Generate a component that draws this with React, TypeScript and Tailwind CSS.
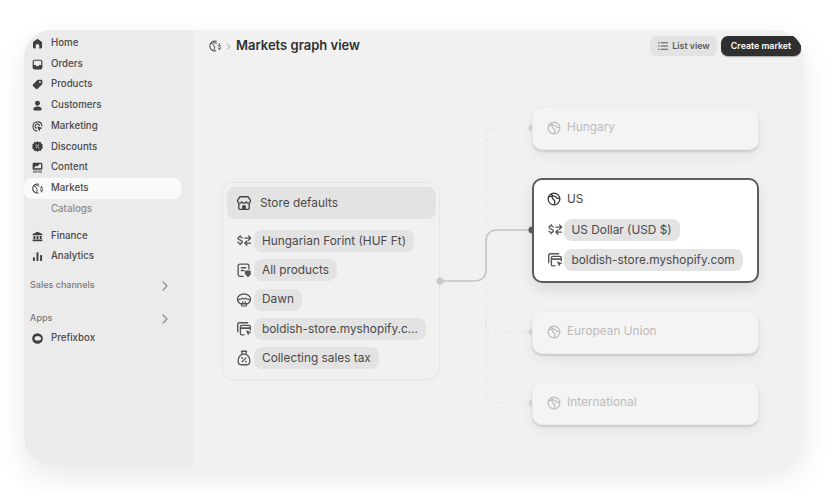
import type { ReactNode } from "react";

type IconProps = { className?: string };

function Svg({ className, children }: IconProps & { children: ReactNode }) {
  return (
    <svg viewBox="0 0 20 20" fill="none" className={className}>
      {children}
    </svg>
  );
}

const HomeIcon = ({ className }: IconProps) => (
  <Svg className={className}>
    <path d="M10 2.5 3.6 7.4c-.4.3-.6.8-.6 1.2v7.2c0 .9.7 1.7 1.7 1.7h2.6v-4.2c0-1.2.9-2 2.7-2s2.7.8 2.7 2v4.2h2.6c1 0 1.7-.8 1.7-1.7V8.6c0-.4-.2-.9-.6-1.2L10 2.5Z" fill="currentColor" />
  </Svg>
);

const InboxIcon = ({ className }: IconProps) => (
  <Svg className={className}>
    <path fillRule="evenodd" clipRule="evenodd" d="M5.5 2.5h9A3 3 0 0 1 17.5 5.5v9a3 3 0 0 1-3 3h-9a3 3 0 0 1-3-3v-9a3 3 0 0 1 3-3Zm-1.2 8.2h3c.3 1.2 1.4 2 2.7 2s2.4-.8 2.7-2h3V5.500c0-.7-.5-1.2-1.2-1.200h-9c-.7 0-1.200.5-1.200 1.200v5.200Z" fill="currentColor" />
  </Svg>
);

const TagIcon = ({ className }: IconProps) => (
  <Svg className={className}>
    <path fillRule="evenodd" clipRule="evenodd" d="M11.5 2.5h4.2c1 0 1.800.8 1.800 1.800v4.200c0 .6-.2 1.100-.6 1.500l-6.600 6.700c-.8.8-2 .8-2.800 0l-4.200-4.200c-.8-.8-.8-2 0-2.800L10 3.100c.4-.4 1-.6 1.500-.6Zm2.300 5.200a1.400 1.400 0 1 0 0-2.900 1.400 1.400 0 0 0 0 2.900Z" fill="currentColor" />
  </Svg>
);

const PersonIcon = ({ className }: IconProps) => (
  <Svg className={className}>
    <circle cx="10" cy="6.5" r="3.8" fill="currentColor" />
    <path d="M3.5 15.5c0-2.400 2.600-4 6.500-4s6.500 1.600 6.500 4c0 1.200-.9 2-2 2h-9c-1.100 0-2-.8-2-2Z" fill="currentColor" />
  </Svg>
);

const TargetIcon = ({ className }: IconProps) => (
  <Svg className={className}>
    <path d="M9 16.700A6.900 6.900 0 1 1 16.800 9" stroke="currentColor" strokeWidth="1.7" strokeLinecap="round" />
    <path d="M8.400 12.700A3.400 3.400 0 1 1 13 8.400" stroke="currentColor" strokeWidth="1.7" strokeLinecap="round" />
    <path d="m9.500 9.500 8.200 2.900-3.400 1.600-1.600 3.600-3.200-8.100Z" fill="currentColor" />
  </Svg>
);

const DiscountIcon = ({ className }: IconProps) => (
  <Svg className={className}>
    <path fillRule="evenodd" clipRule="evenodd" d="m10 1.800 2.300 1.500 2.800-.1.900 2.500 2.200 1.700-.8 2.600.8 2.600-2.200 1.700-.9 2.500-2.800-.1L10 18.200l-2.300-1.500-2.800.1-.9-2.500-2.200-1.700.8-2.600-.8-2.600 2.200-1.700.9-2.500 2.800.1L10 1.800Zm-2.100 5a1 1 0 1 0 0 2 1 1 0 0 0 0-2Zm4.200 4.400a1 1 0 1 0 0 2 1 1 0 0 0 0-2Zm.3-3.900-.8-.7-4.400 5.200.9.700 4.300-5.200Z" fill="currentColor" />
  </Svg>
);

const ContentIcon = ({ className }: IconProps) => (
  <Svg className={className}>
    <path fillRule="evenodd" clipRule="evenodd" d="M4.500 2.500h11c1.100 0 2 .9 2 2v7c0 1.100-.9 2-2 2h-11c-1.100 0-2-.9-2-2v-7c0-1.100.9-2 2-2Zm.1 8.600h10.800V4.700h-2.200l-3.400 4-2-1.800-3.200 4.200Z" fill="currentColor" />
    <path d="M3 15h14v1.200H3zM3 17.200h6v.9H3zM11 17.200h6v.9h-6z" fill="currentColor" />
  </Svg>
);

const GlobeDollarIcon = ({ className }: IconProps) => (
  <Svg className={className}>
    <path d="M11.800 3.400A7 7 0 1 0 11 16.900" stroke="currentColor" strokeWidth="1.6" strokeLinecap="round" />
    <path d="M4 6.500c2.500-.3 3.700.6 3.800 2.200.1 1.400 1.700 1.500 1.800 3 0 1.200-.9 1.900-.7 4.600M7.500 3.600c.2 1.400 1.300 2 2.600 2 1.200 0 1.900.5 2.300 1.400" stroke="currentColor" strokeWidth="1.5" />
    <path d="M18 9.300c-.3-.7-1-1-1.700-1-1 0-1.700.5-1.700 1.400 0 1.800 3.500 1 3.500 2.900 0 .9-.8 1.500-1.800 1.500-.8 0-1.500-.4-1.800-1.100M16.300 7v1.300M16.300 14.100v1.300" stroke="currentColor" strokeWidth="1.4" strokeLinecap="round" />
  </Svg>
);

const BankIcon = ({ className }: IconProps) => (
  <Svg className={className}>
    <path d="M10 2.500 2.500 6.300v1.900h15V6.300L10 2.500Z" fill="currentColor" />
    <path d="M3.600 9.300h3v4.400h-3zM8.500 9.300h3v4.400h-3zM13.400 9.300h3v4.400h-3zM2.500 14.800h15v2.600h-15z" fill="currentColor" />
  </Svg>
);

const BarsIcon = ({ className }: IconProps) => (
  <Svg className={className}>
    <rect x="3" y="11" width="3" height="6" rx="1" fill="currentColor" />
    <rect x="8.500" y="3.500" width="3" height="13.500" rx="1" fill="currentColor" />
    <rect x="14" y="7.500" width="3" height="9.500" rx="1" fill="currentColor" />
  </Svg>
);

const AppBadgeIcon = ({ className }: IconProps) => (
  <Svg className={className}>
    <path fillRule="evenodd" clipRule="evenodd" d="M10 1.800a8.200 8.200 0 1 1 0 16.400 8.200 8.200 0 0 1 0-16.400Zm0 4.400c-2.600 0-4.600 1.600-4.600 3.800 0 .9.4 1.700 1 2.400.3.4.8.6 1.300.6h4.200c2 0 3.700-1.200 3.700-3 0-2.300-2.600-3.800-5.600-3.800Z" fill="currentColor" />
  </Svg>
);

const Chevron = () => (
  <svg viewBox="0 0 10 10" fill="none" className="h-[10px] w-[10px] text-[#8a8a8a]">
    <path d="m3 1 4 4-4 4" stroke="currentColor" strokeWidth="1.2" strokeLinecap="round" strokeLinejoin="round" />
  </svg>
);

const GlobeIcon = ({ className }: IconProps) => (
  <Svg className={className}>
    <circle cx="10" cy="10" r="7.3" stroke="currentColor" strokeWidth="1.6" />
    <path d="M3.500 7c2.700-.5 4.500.3 4.900 2.200.3 1.600 2 1.700 2.500 3.200.3 1-.2 2.400-.5 4.600M6.900 3.500c0 1.800 1.200 2.800 3.100 2.900 2 .1 2.500 1.500 3.600 2.300.9.6 2.200.6 3.600.4" stroke="currentColor" strokeWidth="1.6" />
  </Svg>
);

const StoreIcon = ({ className }: IconProps) => (
  <Svg className={className}>
    <path d="M5.500 3h9l2.600 4.200c.4 1.600-.8 3-2.300 3-1 0-1.900-.6-2.300-1.400-.4.8-1.300 1.400-2.500 1.400S7.900 9.600 7.500 8.800c-.4.8-1.300 1.400-2.300 1.400-1.500 0-2.700-1.400-2.300-3L5.500 3Z" stroke="currentColor" strokeWidth="1.5" strokeLinejoin="round" />
    <path d="M4.200 10.200v5.300c0 .8.700 1.500 1.500 1.500h8.600c.8 0 1.500-.7 1.500-1.500v-5.300" stroke="currentColor" strokeWidth="1.5" />
    <path d="M8 17v-3.500c0-.6.400-1 1-1h2c.6 0 1 .4 1 1V17" fill="currentColor" />
  </Svg>
);

const CurrencyIcon = ({ className }: IconProps) => (
  <Svg className={className}>
    <path d="M8 6.800C7.700 5.900 6.900 5.400 5.700 5.400c-1.400 0-2.300.7-2.300 1.800 0 2.400 4.800 1.200 4.800 3.700 0 1.100-1 1.800-2.500 1.800-1.300 0-2.200-.6-2.500-1.500M5.700 4v1.400M5.700 12.700v1.500" stroke="currentColor" strokeWidth="1.5" strokeLinecap="round" />
    <path d="M11 6.800h6.300M15 4.300l2.400 2.500-2.400 2.400M17.300 12.300H11M13.300 9.900l-2.400 2.400 2.400 2.500" stroke="currentColor" strokeWidth="1.5" strokeLinecap="round" strokeLinejoin="round" />
  </Svg>
);

const CatalogIcon = ({ className }: IconProps) => (
  <Svg className={className}>
    <path d="M9 17H5.500A2 2 0 0 1 3.500 15V5.500a2 2 0 0 1 2-2h8a2 2 0 0 1 2 2V9" stroke="currentColor" strokeWidth="1.5" strokeLinecap="round" />
    <path d="M7 7.500h5M7 10.500h3" stroke="currentColor" strokeWidth="1.5" strokeLinecap="round" />
    <path d="M13 10.500h3.200c.7 0 1.300.6 1.300 1.300V15l-3 3-3.500-3.500V12c0-.8.300-1.500 2-1.500Z" fill="currentColor" />
  </Svg>
);

const ThemeIcon = ({ className }: IconProps) => (
  <Svg className={className}>
    <path d="M5.800 14.200C3.800 13 2.700 11.200 2.700 9.300c0-3.500 3.200-6 7.300-6s7.300 2.500 7.300 6c0 1.900-1.100 3.700-3.100 4.900H5.800Z" stroke="currentColor" strokeWidth="1.5" />
    <path d="M3 9.500c2.500.2 4-.2 5.200-1.500 1 .9 2.600.9 3.600 0 1.200 1.300 2.700 1.700 5.200 1.500" stroke="currentColor" strokeWidth="1.3" />
    <path d="M7.500 14.200v2.500h5v-2.500M8.500 11.500v2.700M11.500 11.500v2.700" stroke="currentColor" strokeWidth="1.3" />
  </Svg>
);

const DomainIcon = ({ className }: IconProps) => (
  <Svg className={className}>
    <path d="M3 13V5c0-1.100.9-2 2-2h9" stroke="currentColor" strokeWidth="1.5" strokeLinecap="round" />
    <path d="M10 16.500H7.500a1.500 1.500 0 0 1-1.500-1.500V7.500C6 6.700 6.700 6 7.500 6h8c.8 0 1.500.7 1.500 1.500V11" stroke="currentColor" strokeWidth="1.5" strokeLinecap="round" />
    <path d="M6 9h11" stroke="currentColor" strokeWidth="1.8" />
    <path d="m12 11.500 6.300 2-2.500 1.300-1.200 2.500-2.600-5.800Z" fill="currentColor" />
  </Svg>
);

const TaxIcon = ({ className }: IconProps) => (
  <Svg className={className}>
    <path d="M7.200 2.500h5.600l-1 3.200c2.700 1.300 4.700 4.200 4.700 7.500 0 2.500-1.600 4.300-4 4.300H7.500c-2.400 0-4-1.800-4-4.300 0-3.300 2-6.200 4.700-7.500l-1-3.200Z" stroke="currentColor" strokeWidth="1.4" strokeLinejoin="round" />
    <path d="M8 5.700h4M7.800 14.200l4.400-4.400" stroke="currentColor" strokeWidth="1.3" strokeLinecap="round" />
    <circle cx="8" cy="10" r="1" fill="currentColor" />
    <circle cx="12" cy="14" r="1" fill="currentColor" />
  </Svg>
);

const ListIcon = ({ className }: IconProps) => (
  <Svg className={className}>
    <path d="M2.500 4.500h1.500M7 4.500h10.500M2.500 10h1.500M7 10h10.500M2.500 15.500h1.500M7 15.500h10.500" stroke="currentColor" strokeWidth="1.7" strokeLinecap="round" />
  </Svg>
);

const navTop = [
  { label: "Home", icon: HomeIcon },
  { label: "Orders", icon: InboxIcon },
  { label: "Products", icon: TagIcon },
  { label: "Customers", icon: PersonIcon },
  { label: "Marketing", icon: TargetIcon },
  { label: "Discounts", icon: DiscountIcon },
  { label: "Content", icon: ContentIcon },
];

function NavRow({ label, icon: Icon, active }: { label: string; icon: (p: IconProps) => ReactNode; active?: boolean }) {
  return (
    <div className={`flex h-[20.7px] items-center rounded-[7px] pl-[7px] ${active ? "bg-[#fafafa]" : ""}`}>
      <Icon className="h-[13px] w-[13px] text-[#3f3f3f]" />
      <span className="ml-[7px] text-[9.7px] font-medium text-[#4a4a4a]">{label}</span>
    </div>
  );
}

function Sidebar() {
  return (
    <aside className="flex w-[169px] shrink-0 flex-col bg-[#ebebeb] pt-[3px] pr-[12px]">
      {navTop.map((item) => (
        <NavRow key={item.label} {...item} />
      ))}
      <NavRow label="Markets" icon={GlobeDollarIcon} active />
      <div className="flex h-[20.7px] items-center pl-[27px] text-[9.7px] font-medium text-[#8a8a8a]">Catalogs</div>
      <div className="mt-[6.5px]">
        <NavRow label="Finance" icon={BankIcon} />
        <NavRow label="Analytics" icon={BarsIcon} />
      </div>
      <div className="mt-[8px] flex h-[20px] items-center justify-between pl-[6px] pr-[11px] text-[9px] font-medium text-[#7a7a7a]">
        <span>Sales channels</span>
        <span className="mt-[2px]"><Chevron /></span>
      </div>
      <div className="mt-[13px] flex h-[20px] items-center justify-between pl-[6px] pr-[11px] text-[9px] font-medium text-[#7a7a7a]">
        <span>Apps</span>
        <span className="mt-[2px]"><Chevron /></span>
      </div>
      <NavRow label="Prefixbox" icon={AppBadgeIcon} />
    </aside>
  );
}

const storeRows = [
  { label: "Hungarian Forint (HUF Ft)", icon: CurrencyIcon },
  { label: "All products", icon: CatalogIcon },
  { label: "Dawn", icon: ThemeIcon },
  { label: "boldish-store.myshopify.c...", icon: DomainIcon },
  { label: "Collecting sales tax", icon: TaxIcon },
];

function Pill({ children }: { children: ReactNode }) {
  return (
    <span className="flex h-[22px] items-center rounded-[8px] bg-[#e3e3e3] px-[8px] pt-[1px] text-[11.85px] text-[#4a4a4a]">
      {children}
    </span>
  );
}

function StoreCard() {
  return (
    <div className="mt-[120px] h-[198px] w-[218px] shrink-0 rounded-[12px] border border-[#e5e5e5] py-[4px] pl-[4px] pr-[3px] shadow-[0_0_2px_rgba(0,0,0,0.03)]">
      <div className="flex h-[32px] items-center rounded-[8px] bg-[#e3e3e3] pl-[8px]">
        <StoreIcon className="h-[18px] w-[18px] text-[#444444]" />
        <span className="ml-[7px] pt-[1px] text-[11.85px] text-[#4a4a4a]">Store defaults</span>
      </div>
      <div className="mt-[11px] flex flex-col gap-[7.3px] pl-[8px]">
        {storeRows.map(({ label, icon: Icon }) => (
          <div key={label} className="flex items-center gap-[1px]">
            <Icon className="h-[18px] w-[18px] shrink-0 text-[#555555]" />
            <Pill>{label}</Pill>
          </div>
        ))}
      </div>
    </div>
  );
}

function MutedMarket({ label }: { label: string }) {
  return (
    <div className="flex h-[43px] items-center rounded-[10px] border border-[#ececec] bg-[#f4f4f4] pb-[1px] pl-[12.5px] shadow-[0_2px_2px_rgba(0,0,0,0.12),0_7px_14px_rgba(0,0,0,0.05)]">
      <GlobeIcon className="h-[16px] w-[16px] text-[#bdbdbd]" />
      <span className="ml-[5.5px] text-[11.85px] text-[#bcbcbc]">{label}</span>
    </div>
  );
}

function UsMarket() {
  return (
    <div className="flex h-[105px] flex-col rounded-[10px] border-2 border-[#5c5c5c] bg-white pl-[11.5px] pt-[9px] shadow-[0_7px_14px_rgba(0,0,0,0.09)]">
      <div className="flex h-[20px] items-center">
        <GlobeIcon className="h-[16px] w-[16px] text-[#333333]" />
        <span className="ml-[5.5px] pt-[1px] text-[11.85px] text-[#444444]">US</span>
      </div>
      <div className="mt-[10px] flex items-center">
        <CurrencyIcon className="h-[18px] w-[18px] shrink-0 text-[#555555]" />
        <Pill>US Dollar (USD $)</Pill>
      </div>
      <div className="mt-[8px] flex items-center">
        <DomainIcon className="h-[18px] w-[18px] shrink-0 text-[#555555]" />
        <Pill>boldish-store.myshopify.com</Pill>
      </div>
    </div>
  );
}

// connector lines, coordinates are relative to the canvas (origin 193,62)
function Connectors() {
  return (
    <svg className="pointer-events-none absolute left-0 top-0 h-full w-full" fill="none">
      <g stroke="#e4e4e4" strokeWidth="1.5" strokeDasharray="1 4.5" strokeLinecap="round">
        <path d="M293 78C293 70 298 66 306 66H339" />
        <path d="M293 78V329C293 337 298 341 306 341H339" />
        <path d="M293 258V262C293 268 298 270 306 270H339" />
      </g>
      <path d="M247 219H281C289 219 293 215 293 207V180C293 172 297 168 305 168H339" stroke="#c4c4c4" strokeWidth="1.5" />
      <circle cx="247" cy="219" r="3.5" fill="#c9c9c9" />
      <circle cx="339" cy="66" r="3.5" fill="#d9d9d9" />
      <circle cx="339" cy="168" r="3.5" fill="#5c5c5c" />
      <circle cx="339" cy="270" r="3.5" fill="#d9d9d9" />
      <circle cx="339" cy="341" r="3.5" fill="#d9d9d9" />
    </svg>
  );
}

export default function App() {
  return (
    <div className="h-[492px] w-[837px] overflow-hidden bg-white pl-[24px] pt-[30px] font-['Inter',sans-serif]">
      <div className="flex h-[435px] w-[780px] overflow-hidden rounded-[28px] shadow-[0_12px_30px_rgba(0,0,0,0.09)]">
        <Sidebar />
        <main className="flex min-w-0 flex-1 flex-col bg-[#f1f1f1]">
          <header className="flex h-[32px] shrink-0 items-center pl-[15px] pr-[3px]">
            <GlobeDollarIcon className="h-[14px] w-[14px] text-[#5a5a5a]" />
            <svg viewBox="0 0 10 10" fill="none" className="ml-[3px] h-[7px] w-[7px] text-[#8a8a8a]">
              <path d="m3 1 4 4-4 4" stroke="currentColor" strokeWidth="1.2" />
            </svg>
            <h1 className="ml-[4px] text-[13px] font-semibold text-[#303030]">Markets graph view</h1>
            <div className="ml-auto flex items-center gap-[4px]">
              <button className="flex h-[20px] w-[67px] items-center justify-center gap-[3px] rounded-[6px] bg-[#e3e3e3] text-[8.8px] font-semibold text-[#5a5a5a]">
                <ListIcon className="h-[12px] w-[12px] text-[#555555]" />
                List view
              </button>
              <button className="flex h-[20px] w-[80px] items-center justify-center rounded-[7px] bg-[#303030] text-[8.8px] font-semibold text-white shadow-[0_1px_1px_rgba(0,0,0,0.3)]">
                Create market
              </button>
            </div>
          </header>
          <div className="relative flex flex-1 items-start pl-[29px]">
            <Connectors />
            <StoreCard />
            <div className="relative ml-[92px] mt-[45px] flex w-[227px] flex-col gap-[28px]">
              <MutedMarket label="Hungary" />
              <UsMarket />
              <MutedMarket label="European Union" />
              <MutedMarket label="International" />
            </div>
          </div>
        </main>
      </div>
    </div>
  );
}
